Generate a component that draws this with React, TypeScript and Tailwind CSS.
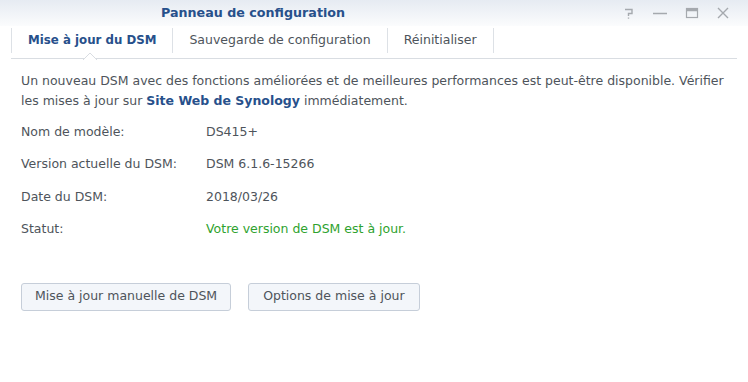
const rows = [
  { label: "Nom de modèle:", value: "DS415+" },
  { label: "Version actuelle du DSM:", value: "DSM 6.1.6-15266" },
  { label: "Date du DSM:", value: "2018/03/26" },
  { label: "Statut:", value: "Votre version de DSM est à jour.", ok: true },
];

const tabs = ["Mise à jour du DSM", "Sauvegarde de configuration", "Réinitialiser"];

function WindowButtons() {
  return (
    <div className="flex items-center gap-[17px] pr-[18px] text-[#a5a9ae]">
      <svg width="12" height="14" viewBox="0 0 12 14" fill="none" stroke="currentColor" strokeWidth="1.4">
        <path d="M2 3.5h7v4H5.5v2.5" />
        <path d="M5.5 11.5v1.2" />
      </svg>
      <svg width="16" height="14" viewBox="0 0 16 14" fill="none" stroke="currentColor" strokeWidth="1.5">
        <path d="M1 7.5h14" />
      </svg>
      <svg width="14" height="14" viewBox="0 0 14 14" fill="none" stroke="currentColor">
        <rect x="1.5" y="2.5" width="11" height="9" strokeWidth="1.2" />
        <path d="M1.5 4h11" strokeWidth="2.5" />
      </svg>
      <svg width="14" height="14" viewBox="0 0 14 14" fill="none" stroke="currentColor" strokeWidth="1.4">
        <path d="M2 2l10 10M12 2L2 12" />
      </svg>
    </div>
  );
}

export default function App() {
  return (
    <div className="h-[382px] w-[748px] overflow-hidden bg-white font-['Verdana','DejaVu_Sans',sans-serif] text-[12.5px] text-[#4e545b]">
      <div className="relative flex h-[26px] items-center bg-gradient-to-b from-[#e6ebf2] to-[#fbfcfd]">
        <div className="absolute left-[161px] top-[3px] text-[12.7px] font-bold text-[#27508b]">
          Panneau de configuration
        </div>
        <div className="ml-auto">
          <WindowButtons />
        </div>
      </div>

      <div className="mx-[11px] flex h-[33px] items-start border-b border-[#d9dde2]">
        {tabs.map((tab, i) => (
          <div
            key={tab}
            className={
              "relative mt-[2px] flex h-[25px] items-center border-l border-[#dde1e6] " +
              (i === 0 ? "px-[16px] text-[11.8px] font-bold text-[#27508b]" : "px-[16px] text-[#4e545b]") +
              (i === tabs.length - 1 ? " border-r" : "")
            }
          >
            {tab}
            {i === 0 && (
              <svg
                className="absolute bottom-[-7px] left-[71px]"
                width="14"
                height="8"
                viewBox="0 0 14 8"
              >
                <path d="M0 8L7 1l7 7" fill="white" stroke="#d9dde2" />
              </svg>
            )}
          </div>
        ))}
      </div>

      <div className="px-[21px] pt-[12px]">
        <p className="leading-[20px]">
          Un nouveau DSM avec des fonctions améliorées et de meilleures performances est peut-être disponible. Vérifier
          les mises à jour sur <span className="font-bold text-[#27508b]">Site Web de Synology</span> immédiatement.
        </p>

        <div className="mt-[5px] flex flex-col">
          {rows.map((r) => (
            <div key={r.label} className="flex h-[32.4px] items-center">
              <div className="w-[185px]">{r.label}</div>
              <div className={r.ok ? "text-[#2ea22e]" : ""}>{r.value}</div>
            </div>
          ))}
        </div>

        <div className="mt-[37px] flex gap-[17px]">
          <button className="h-[28px] rounded-[3px] border border-[#c6ced9] bg-[#f3f6fa] px-[13px] text-[#4e545b]">
            Mise à jour manuelle de DSM
          </button>
          <button className="h-[28px] rounded-[3px] border border-[#c6ced9] bg-[#f3f6fa] px-[14px] text-[#4e545b]">
            Options de mise à jour
          </button>
        </div>
      </div>
    </div>
  );
}
